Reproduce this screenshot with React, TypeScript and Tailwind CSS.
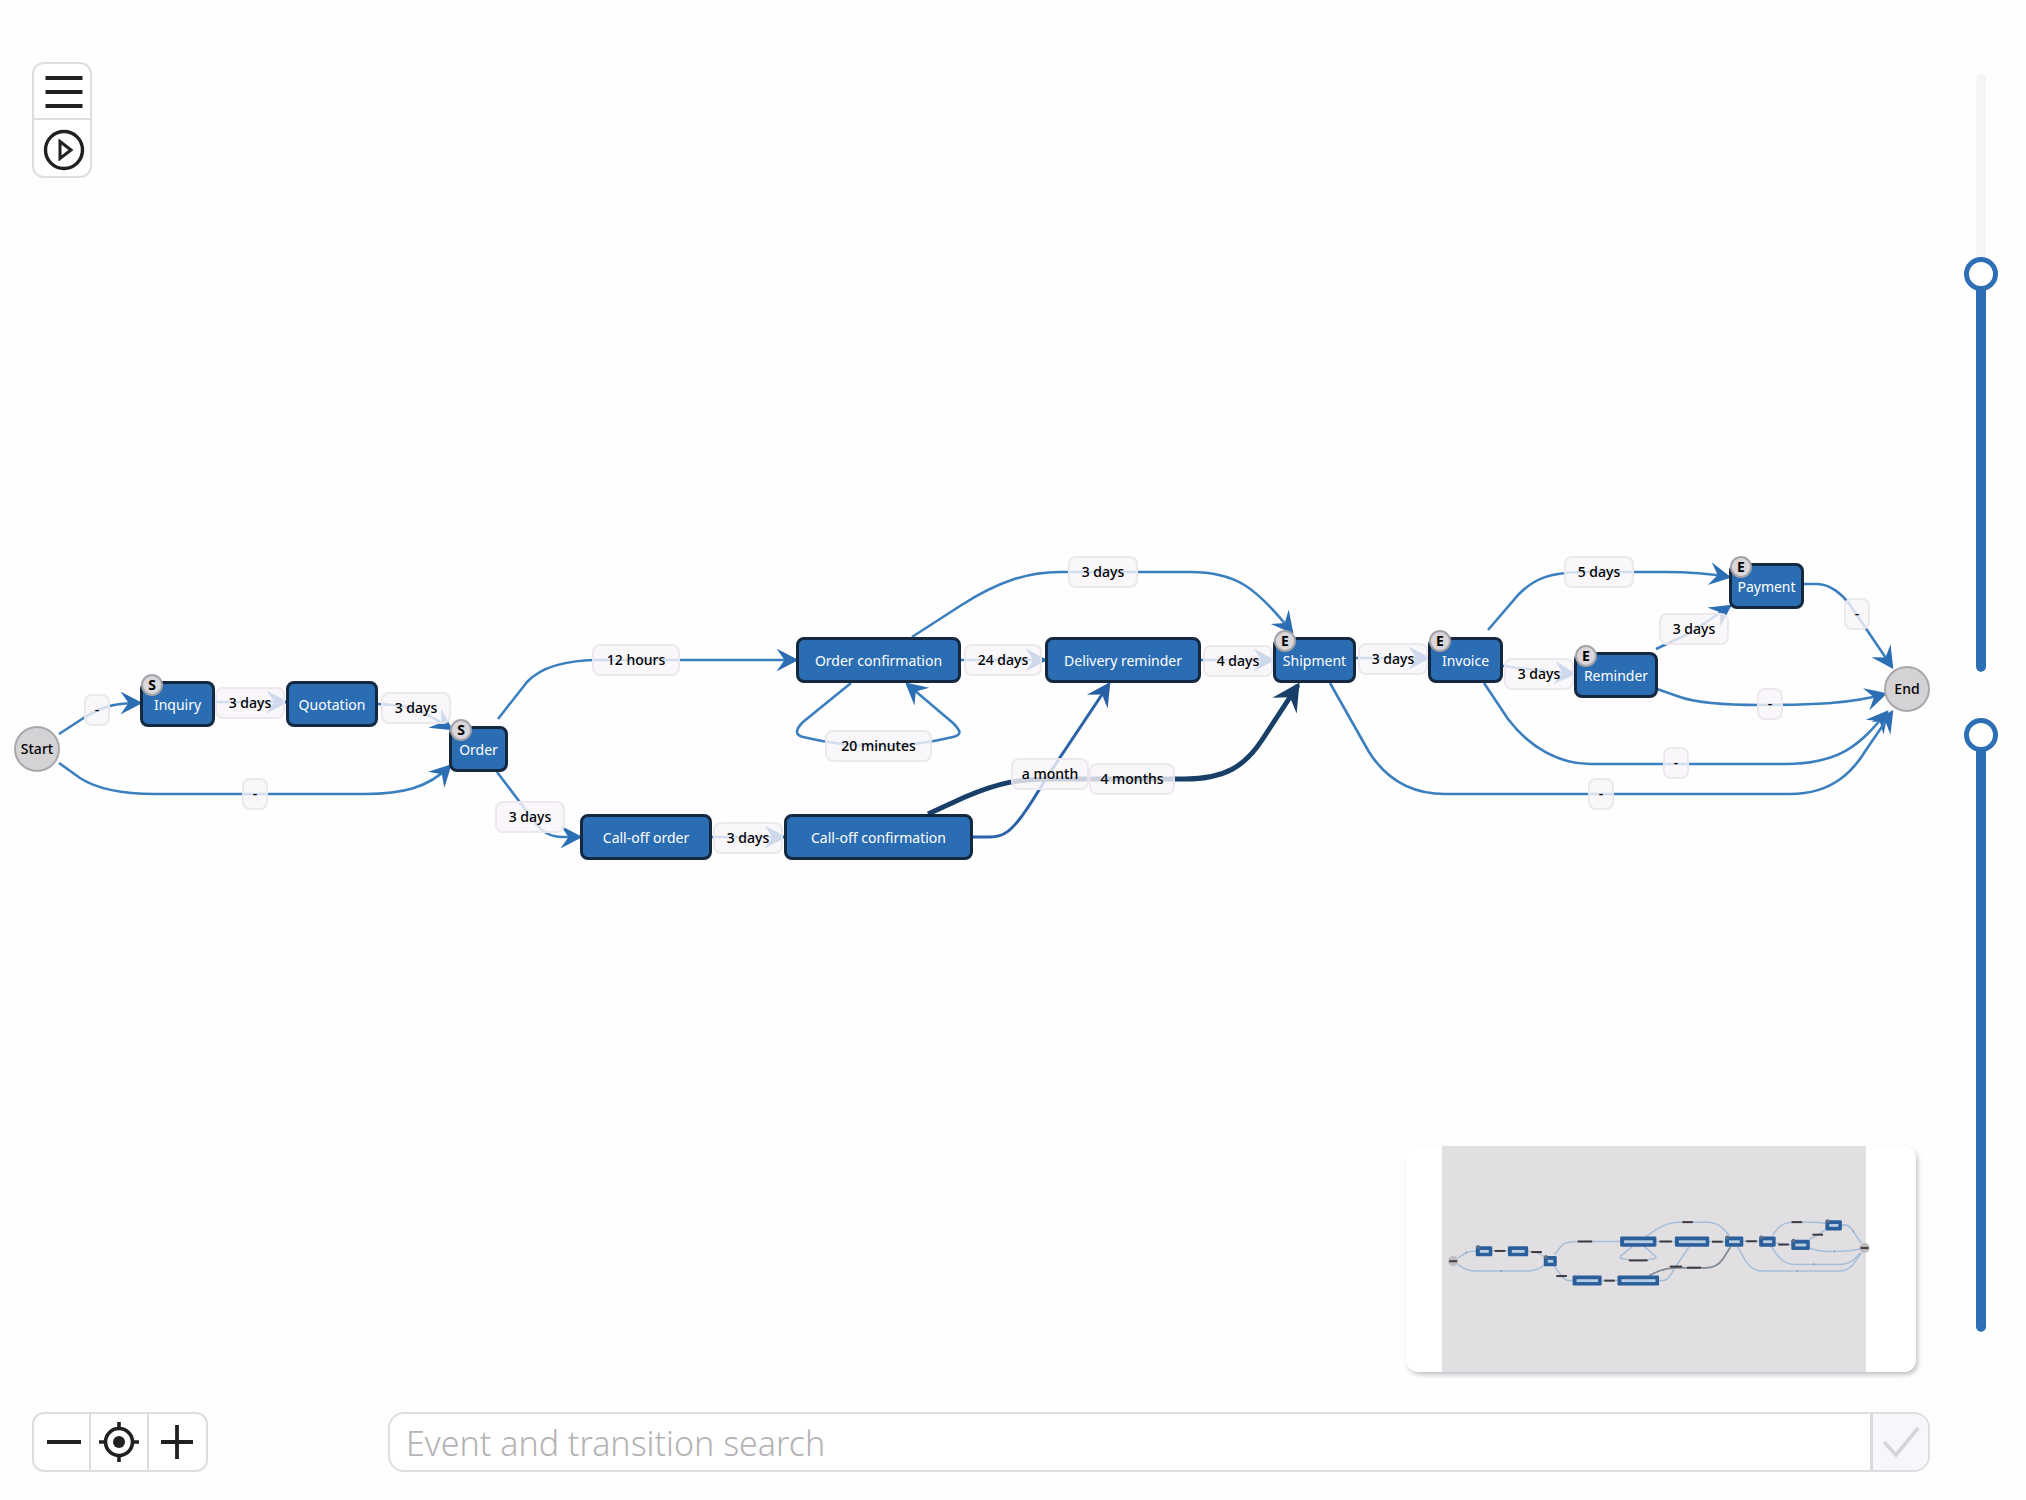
import { useState } from 'react';

type Badge = 'S' | 'E';

type GraphNode = {
  id: string;
  x: number;
  y: number;
  w: number;
  badge?: Badge;
};

type Kind = 'fast' | 'slow' | 'slowest';

type GraphEdge = {
  path: string;
  label: string;
  x: number;
  y: number;
  w: number;
  kind?: Kind;
};

const NODE_HEIGHT = 46;
const LABEL_HEIGHT = 32;

const nodes: GraphNode[] = [
  { id: 'Inquiry', x: 140, y: 681, w: 75, badge: 'S' },
  { id: 'Quotation', x: 286, y: 681, w: 92 },
  { id: 'Order', x: 449, y: 726, w: 59, badge: 'S' },
  { id: 'Order confirmation', x: 796, y: 637, w: 165 },
  { id: 'Call-off order', x: 580, y: 814, w: 132 },
  { id: 'Call-off confirmation', x: 784, y: 814, w: 189 },
  { id: 'Delivery reminder', x: 1045, y: 637, w: 156 },
  { id: 'Shipment', x: 1273, y: 637, w: 83, badge: 'E' },
  { id: 'Invoice', x: 1428, y: 637, w: 75, badge: 'E' },
  { id: 'Reminder', x: 1574, y: 652, w: 84, badge: 'E' },
  { id: 'Payment', x: 1729, y: 563, w: 75, badge: 'E' },
];

const terminals = [
  { id: 'Start', x: 14, y: 726 },
  { id: 'End', x: 1884, y: 666 },
];

const edges: GraphEdge[] = [
  { path: 'M59 734 L82 719 C102 706 115 703 140 703', label: '-', x: 84, y: 694, w: 26 },
  { path: 'M214 702 H286', label: '3 days', x: 215, y: 687, w: 70 },
  { path: 'M378 704 C410 705 424 711 451 729', label: '3 days', x: 381, y: 692, w: 70 },
  { path: 'M59 763 L80 778 C97 789 125 794 155 794 H365 C402 794 428 788 450 766', label: '-', x: 242, y: 778, w: 26 },
  { path: 'M498 719 L527 682 C541 667 565 660 600 660 H796', label: '12 hours', x: 592, y: 644, w: 88 },
  { path: 'M961 660 H1045', label: '24 days', x: 964, y: 644, w: 78 },
  {
    path: 'M851 683 L803 722 C795 730 795 735 803 737 Q840 746 878 746 Q916 746 953 737 C961 735 962 732 953 723 L907 684',
    label: '20 minutes',
    x: 825,
    y: 730,
    w: 107,
  },
  { path: 'M497 772 L522 805 C538 828 545 837 562 837 H580', label: '3 days', x: 495, y: 801, w: 70 },
  { path: 'M712 837 H784', label: '3 days', x: 713, y: 822, w: 70 },
  { path: 'M912 637 L960 606 C1000 580 1030 572 1060 572 H1190 C1235 572 1255 586 1292 632', label: '3 days', x: 1068, y: 556, w: 70 },
  {
    path: 'M973 837 H990 C1005 837 1012 829 1022 816 C1032 802 1038 792 1045 780 L1109 684',
    label: 'a month',
    x: 1011,
    y: 758,
    w: 78,
    kind: 'slow',
  },
  {
    path: 'M928 814 L965 797 C1000 782 1020 779 1050 779 H1185 C1225 779 1245 766 1262 740 L1298 685',
    label: '4 months',
    x: 1089,
    y: 763,
    w: 86,
    kind: 'slowest',
  },
  { path: 'M1201 660 H1273', label: '4 days', x: 1203, y: 645, w: 70 },
  { path: 'M1356 658 H1428', label: '3 days', x: 1358, y: 643, w: 70 },
  { path: 'M1488 630 L1519 594 C1535 578 1550 573 1580 572 H1665 Q1700 572 1729 577', label: '5 days', x: 1564, y: 556, w: 70 },
  { path: 'M1503 666 Q1540 671 1574 674', label: '3 days', x: 1504, y: 658, w: 70 },
  { path: 'M1656 649 L1690 633 L1730 606', label: '3 days', x: 1659, y: 613, w: 70 },
  { path: 'M1804 584 H1817 C1830 584 1842 594 1850 605 L1892 667', label: '-', x: 1844, y: 598, w: 26 },
  { path: 'M1657 689 L1680 697 C1700 704 1730 705 1760 705 C1810 705 1850 704 1885 694', label: '-', x: 1757, y: 688, w: 26 },
  { path: 'M1484 683 L1508 719 C1530 748 1560 764 1590 764 H1785 C1840 764 1860 745 1887 712', label: '-', x: 1663, y: 747, w: 26 },
  { path: 'M1330 683 L1369 752 C1388 782 1415 794 1445 794 H1790 C1835 794 1855 768 1866 750 L1892 712', label: '-', x: 1588, y: 778, w: 26 },
];

const edgeStyles: Record<Kind, { stroke: string; width: number; head: number; fill: string }> = {
  fast: { stroke: '#3c7fbf', width: 2.6, head: 23, fill: '#2b6eb4' },
  slow: { stroke: '#2b62a9', width: 3, head: 25, fill: '#285fa6' },
  slowest: { stroke: '#183f68', width: 5, head: 29, fill: '#183f68' },
};

const kinds: Kind[] = ['fast', 'slow', 'slowest'];

function Edges() {
  return (
    <svg className="absolute inset-0 h-full w-full" aria-hidden="true">
      <defs>
        {kinds.map((kind) => {
          const { head, fill } = edgeStyles[kind];
          return (
            <marker
              key={kind}
              id={`head-${kind}`}
              markerUnits="userSpaceOnUse"
              markerWidth={head}
              markerHeight={head}
              viewBox="0 0 20 20"
              refX="18"
              refY="10"
              orient="auto"
            >
              <path d="M1 0 L20 10 L1 20 L8 10 Z" fill={fill} />
            </marker>
          );
        })}
      </defs>
      {edges.map((edge) => {
        const kind = edge.kind ?? 'fast';
        return (
          <path
            key={edge.path}
            d={edge.path}
            fill="none"
            stroke={edgeStyles[kind].stroke}
            strokeWidth={edgeStyles[kind].width}
            markerEnd={`url(#head-${kind})`}
          />
        );
      })}
    </svg>
  );
}

function ProcessGraph() {
  return (
    <div className="absolute inset-0 overflow-hidden text-sm leading-5 font-medium">
      <Edges />
      {edges.map((edge) => (
        <div
          key={edge.path}
          className="absolute flex items-center justify-center rounded-lg border-2 border-[#e8e5ea]/80 bg-[#f7f5f9]/80 whitespace-nowrap text-black"
          style={{ left: edge.x, top: edge.y, width: edge.w, height: LABEL_HEIGHT }}
        >
          {edge.label}
        </div>
      ))}
      {nodes.map((node) => (
        <div
          key={node.id}
          className="absolute flex items-center justify-center rounded-lg border-[3px] border-[#14293f] bg-[#2b6db3] pt-0.5 font-normal whitespace-nowrap text-white"
          style={{ left: node.x, top: node.y, width: node.w, height: NODE_HEIGHT }}
        >
          {node.id}
          {node.badge ? (
            <span className="absolute -top-2.5 -left-0.5 flex size-[22px] items-center justify-center rounded-full border-2 border-[#a5a3a7] bg-[#d9d7db] font-bold text-black">
              {node.badge}
            </span>
          ) : null}
        </div>
      ))}
      {terminals.map((terminal) => (
        <div
          key={terminal.id}
          className="absolute flex size-[46px] items-center justify-center rounded-full border-2 border-[#a9a7ab] bg-[#d5d2d6] text-black"
          style={{ left: terminal.x, top: terminal.y }}
        >
          {terminal.id}
        </div>
      ))}
    </div>
  );
}

function Minimap() {
  return (
    <div className="pointer-events-auto mr-3.5 mb-10 flex h-[226px] w-[510px] justify-center self-end rounded-xl bg-white shadow-[2px_3px_4px_rgba(60,50,70,0.28)]">
      <svg viewBox="0 0 510 226" className="h-full w-full" role="img" aria-label="Graph overview">
        <rect x="36" width="424" height="226" fill="#e1dfe2" />
        <g transform="translate(39 -49.6) scale(0.22)">
          {edges.map((edge) => (
            <path
              key={edge.path}
              d={edge.path}
              fill="none"
              stroke={edge.kind === 'slowest' ? '#7f8a96' : '#a6bfd9'}
              strokeWidth={edge.kind === 'slowest' ? 8 : 7}
            />
          ))}
          {edges.map((edge) => (
            <rect
              key={edge.path}
              x={edge.x + 11}
              y={edge.y + 11}
              width={edge.w - 22}
              height="9"
              fill={edge.label === '-' ? '#6f8fb2' : '#3f3a3d'}
            />
          ))}
          {nodes.map((node) => (
            <g key={node.id}>
              <rect x={node.x} y={node.y} width={node.w} height={NODE_HEIGHT} rx="6" fill="#2a5f9c" />
              <rect x={node.x + 18} y={node.y + 17} width={node.w - 34} height="13" fill="#b9cde2" />
              {node.badge ? <circle cx={node.x + 10} cy={node.y + 4} r="9" fill="#5f6f86" /> : null}
            </g>
          ))}
          {terminals.map((terminal) => (
            <g key={terminal.id}>
              <circle cx={terminal.x + 23} cy={terminal.y + 23} r="23" fill="#bfbcc3" />
              <rect x={terminal.x + 5} y={terminal.y + 18} width="36" height="10" fill="#4b4548" />
            </g>
          ))}
        </g>
      </svg>
    </div>
  );
}

type SliderProps = {
  label: string;
  initial: number;
};

function VerticalSlider({ label, initial }: SliderProps) {
  const [value, setValue] = useState(initial);

  return (
    <div className="pointer-events-auto grid flex-1 justify-items-center">
      <div className="col-start-1 row-start-1 mt-[17px] flex w-2.5 flex-col justify-end overflow-hidden rounded-full bg-[#f6f4f7]">
        <div className="rounded-b-full bg-[#2c6fb5]" style={{ height: `${value}%` }} />
      </div>
      <input
        type="range"
        min={0}
        max={100}
        step={0.5}
        value={value}
        aria-label={label}
        onChange={(event) => setValue(Number(event.target.value))}
        className="col-start-1 row-start-1 h-full w-[34px] appearance-none bg-transparent [direction:rtl] [writing-mode:vertical-lr] [&::-webkit-slider-thumb]:size-[34px] [&::-webkit-slider-thumb]:appearance-none [&::-webkit-slider-thumb]:rounded-full [&::-webkit-slider-thumb]:border-[5px] [&::-webkit-slider-thumb]:border-solid [&::-webkit-slider-thumb]:border-[#2c6fb5] [&::-webkit-slider-thumb]:bg-white"
      />
    </div>
  );
}

function Toolbar() {
  return (
    <div className="pointer-events-auto flex w-[60px] flex-col divide-y-2 divide-[#e0dde2] rounded-xl border-2 border-[#e0dde2] bg-white">
      <button type="button" aria-label="Menu" className="flex h-14 items-center justify-center pt-0.5 pl-1">
        <svg viewBox="0 0 40 40" className="size-10" stroke="#221f22" strokeWidth="3.8">
          <path d="M1.5 6 H38.5 M1.5 20 H38.5 M1.5 34 H38.5" />
        </svg>
      </button>
      <button type="button" aria-label="Play" className="flex h-14 items-center justify-center pt-1 pl-1">
        <svg viewBox="0 0 42 42" className="size-[42px]" fill="none" stroke="#221f22">
          <circle cx="21" cy="21" r="18.5" strokeWidth="3.4" />
          <path d="M17 12.5 L28 21 L17 29.5 Z" strokeWidth="3" />
        </svg>
      </button>
    </div>
  );
}

function ZoomControls() {
  return (
    <div className="pointer-events-auto grid h-[60px] w-[176px] shrink-0 grid-cols-3 divide-x-2 divide-[#e0dde2] rounded-xl border-2 border-[#e0dde2] bg-white">
      <button type="button" aria-label="Zoom out" className="flex items-center justify-center pl-1">
        <svg viewBox="0 0 40 40" className="size-10" stroke="#221f22" strokeWidth="3.8">
          <path d="M3 20 H37" />
        </svg>
      </button>
      <button type="button" aria-label="Center" className="flex items-center justify-center">
        <svg viewBox="0 0 42 42" className="size-[42px]" fill="none" stroke="#221f22" strokeWidth="3.6">
          <circle cx="21" cy="21" r="13.5" />
          <circle cx="21" cy="21" r="6" fill="#221f22" stroke="none" />
          <path d="M21 1 V8 M21 34 V41 M1 21 H8 M34 21 H41" />
        </svg>
      </button>
      <button type="button" aria-label="Zoom in" className="flex items-center justify-center">
        <svg viewBox="0 0 40 40" className="size-10" stroke="#221f22" strokeWidth="3.8">
          <path d="M4 20 H36 M20 3 V37" />
        </svg>
      </button>
    </div>
  );
}

function SearchBar() {
  const [query, setQuery] = useState('');

  return (
    <form
      onSubmit={(event) => event.preventDefault()}
      className="pointer-events-auto flex h-[60px] flex-1 overflow-hidden rounded-2xl border-2 border-[#e0dde2] bg-white"
    >
      <input
        type="text"
        value={query}
        aria-label="Event and transition search"
        onChange={(event) => setQuery(event.target.value)}
        placeholder="Event and transition search"
        className="min-w-0 flex-1 px-4 pt-0.5 text-[34px] font-light text-[#333] outline-none placeholder:text-[#b4b2b5]"
      />
      <button
        type="submit"
        aria-label="Search"
        className="flex w-[58px] items-center justify-center border-l-3 border-[#dcdadd] bg-[#f8f6fa]"
      >
        <svg viewBox="0 0 40 32" className="h-8 w-10" fill="none" stroke="#d6d4d8" strokeWidth="3.6">
          <path d="M3 16 L15 29 L37 2" />
        </svg>
      </button>
    </form>
  );
}

export default function App() {
  return (
    <div className="relative h-screen bg-[#fefefe] font-['Noto_Sans',sans-serif]">
      <ProcessGraph />
      <div className="pointer-events-none relative flex h-full">
        <main className="flex flex-1 flex-col justify-between pt-[62px] pr-1.5 pb-7 pl-8">
          <Toolbar />
          <div className="flex flex-col">
            <Minimap />
            <div className="flex gap-[180px]">
              <ZoomControls />
              <SearchBar />
            </div>
          </div>
        </main>
        <aside className="flex w-[90px] flex-col gap-[46px] pt-[57px] pb-[168px]">
          <VerticalSlider label="Events" initial={65.5} />
          <VerticalSlider label="Transitions" initial={100} />
        </aside>
      </div>
    </div>
  );
}
